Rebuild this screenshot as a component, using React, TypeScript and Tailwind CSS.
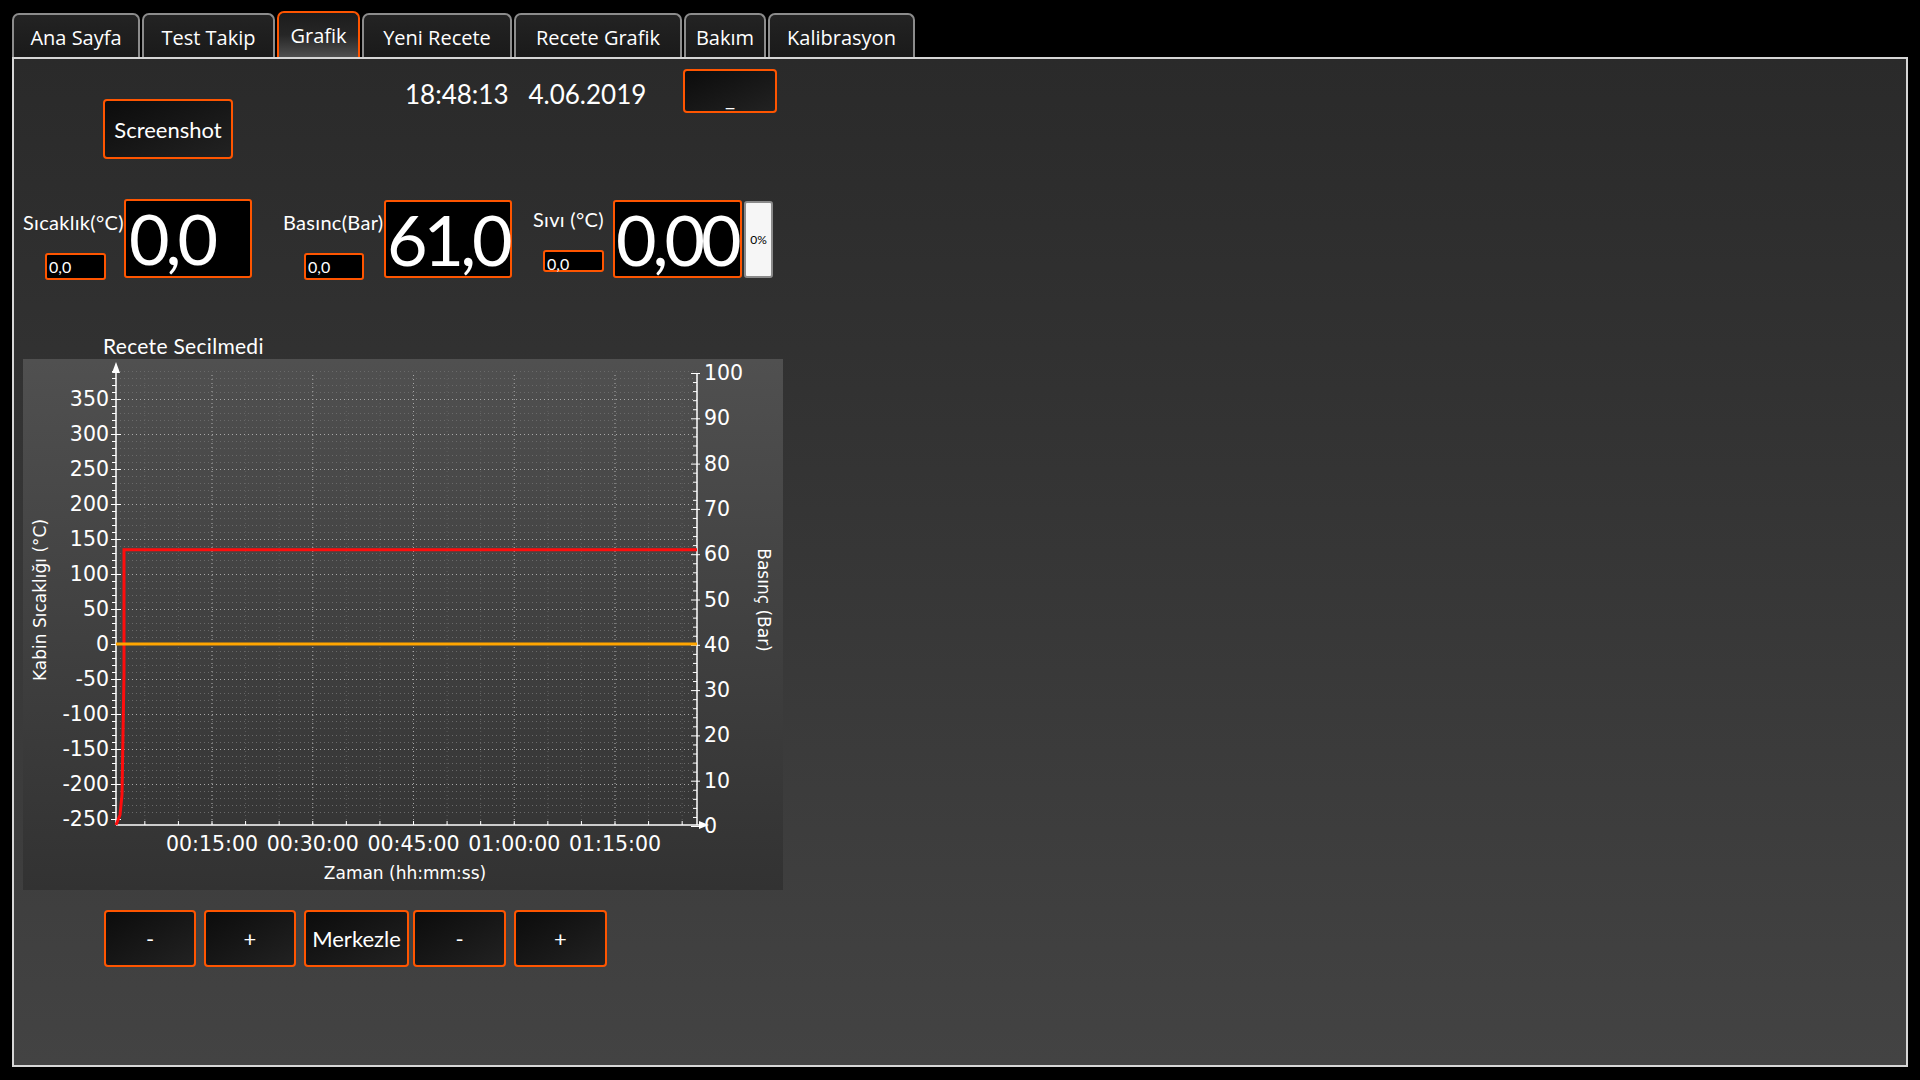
import React from "react";

const tabs = [
  { label: "Ana Sayfa", w: "w-[128px]" },
  { label: "Test Takip", w: "w-[133px]" },
  { label: "Grafik", w: "w-[83px]", active: true },
  { label: "Yeni Recete", w: "w-[150px]" },
  { label: "Recete Grafik", w: "w-[168px]" },
  { label: "Bakım", w: "w-[82px]" },
  { label: "Kalibrasyon", w: "w-[147px]" },
];

const orangeBtn =
  "flex items-center justify-center rounded-[4px] border-2 border-[#ff5500] bg-linear-to-br from-[#0c0c0c] to-[#222222] text-white";

function SmallBox({ className }: { className: string }) {
  return (
    <div
      className={`${className} rounded-[3px] border-2 border-[#ff5500] bg-black pl-[2px] pt-[4px] text-[16px] leading-none text-white`}
    >
      0,0
    </div>
  );
}

function BigBox({ value, className }: { value: string; className: string }) {
  return (
    <div
      className={`${className} whitespace-nowrap rounded-[3px] border-2 border-[#ff5500] bg-black pl-[1px] text-[70px] leading-[74px] tracking-[-4px] text-white`}
    >
      {value}
    </div>
  );
}

// chart geometry (local to the chart panel)
const AX = 93; // left axis x
const RX = 674; // right axis x
const BY = 466; // x axis y
const yl = (v: number) => 285 - v * 0.7;
const yr = (v: number) => 467 - v * 4.53;
const majorX = [189, 289.75, 390.5, 491.25, 592];
const step = 100.75 / 3;

function Chart() {
  const leftMinor: number[] = [];
  for (let v = -250; v <= 390; v += 10) leftMinor.push(v);
  const rightMinor: number[] = [];
  for (let v = 0; v <= 100; v += 2) rightMinor.push(v);
  const xTicks: number[] = [];
  for (let x = majorX[0] - 2 * step; x < RX - 4; x += step) if (x > AX + 4) xTicks.push(x);

  return (
    <svg width="760" height="531" viewBox="0 0 760 531" className="block">
      {/* minor horizontal grid */}
      {leftMinor.map((v) =>
        v % 50 !== 0 ? (
          <line key={"hm" + v} x1={AX} x2={RX} y1={yl(v) + 0.5} y2={yl(v) + 0.5} stroke="#6a6a6a" strokeDasharray="1 3" />
        ) : null
      )}
      {/* minor vertical grid */}
      {xTicks.map((x) => (
        <line key={"vm" + x} x1={x} x2={x} y1={16} y2={BY} stroke="#5e5e5e" strokeDasharray="1 3" />
      ))}
      {/* major grid */}
      {[-200, -150, -100, -50, 0, 50, 100, 150, 200, 250, 300, 350].map((v) => (
        <line key={"hM" + v} x1={AX} x2={RX} y1={yl(v) + 0.5} y2={yl(v) + 0.5} stroke="#a8a8a8" strokeDasharray="1 3" />
      ))}
      {majorX.map((x) => (
        <line key={"vM" + x} x1={x} x2={x} y1={16} y2={BY} stroke="#a8a8a8" strokeDasharray="1 3" />
      ))}

      {/* axes */}
      <line x1={AX} x2={AX} y1={6} y2={BY} stroke="#ffffff" strokeWidth="1.5" />
      <polygon points={`${AX - 4},${14} ${AX},${3} ${AX + 4},${14}`} fill="#ffffff" />
      <line x1={RX} x2={RX} y1={yr(100)} y2={BY} stroke="#ffffff" strokeWidth="1.5" />
      <line x1={AX} x2={RX + 6} y1={BY} y2={BY} stroke="#ffffff" strokeWidth="1.5" />
      <polygon points={`${RX + 2},${BY - 4} ${RX + 12},${BY} ${RX + 2},${BY + 4}`} fill="#ffffff" />

      {leftMinor.map((v) => (
        <line
          key={"lt" + v}
          x1={v % 50 === 0 ? AX - 5 : AX - 4}
          x2={v % 50 === 0 ? AX + 5 : AX}
          y1={yl(v) + 0.5}
          y2={yl(v) + 0.5}
          stroke="#ffffff"
        />
      ))}
      {rightMinor.map((v) => (
        <line
          key={"rt" + v}
          x1={v % 10 === 0 ? RX - 6 : RX - 4}
          x2={v % 10 === 0 ? RX + 3 : RX}
          y1={yr(v) + 0.5}
          y2={yr(v) + 0.5}
          stroke="#ffffff"
        />
      ))}
      {xTicks.map((x) => (
        <line key={"xt" + x} x1={x} x2={x} y1={BY - 4} y2={BY} stroke="#ffffff" />
      ))}

      {/* series */}
      <polyline
        points={`${AX},${BY} ${AX + 4},${BY - 10} ${AX + 6},${BY - 30} ${AX + 8},${yl(0) + 30} ${AX + 8},${yr(61)} ${RX},${yr(61)}`}
        fill="none"
        stroke="#ff0d0d"
        strokeWidth="3"
      />
      <line x1={AX} x2={RX} y1={yl(0)} y2={yl(0)} stroke="#ffa500" strokeWidth="3" />

      {/* labels */}
      <g fill="#ffffff" fontFamily="DejaVu Sans, sans-serif" fontSize="20.5">
        {[350, 300, 250, 200, 150, 100, 50, 0, -50, -100, -150, -200, -250].map((v) => (
          <text key={"ll" + v} x={86} y={yl(v) + 7} textAnchor="end">
            {v}
          </text>
        ))}
        {[100, 90, 80, 70, 60, 50, 40, 30, 20, 10, 0].map((v) => (
          <text key={"rl" + v} x={681} y={yr(v) + 7}>
            {v}
          </text>
        ))}
        {["00:15:00", "00:30:00", "00:45:00", "01:00:00", "01:15:00"].map((t, i) => (
          <text key={t} x={majorX[i]} y={492} textAnchor="middle">
            {t}
          </text>
        ))}
      </g>
      <g fill="#ffffff" fontFamily="DejaVu Sans, sans-serif" fontSize="17">
        <text x={382} y={520} textAnchor="middle">
          Zaman (hh:mm:ss)
        </text>
        <text x={0} y={0} textAnchor="middle" transform="translate(23 241) rotate(-90)">
          Kabin Sıcaklığı (°C)
        </text>
        <text x={0} y={0} textAnchor="middle" transform="translate(735 241) rotate(90)">
          Basınç (Bar)
        </text>
      </g>
    </svg>
  );
}

export default function App() {
  return (
    <div className="h-[1080px] w-[1920px] overflow-hidden bg-black font-[Lato,sans-serif] text-white">
      {/* Tabs */}
      <div className="flex h-[57px] items-end gap-[2px] pl-[12px] font-['Open_Sans',sans-serif] text-[20px]">
        {tabs.map((t) => (
          <div
            key={t.label}
            className={
              t.active
                ? `${t.w} flex h-[46px] items-center justify-center rounded-t-[7px] border-2 border-b-0 border-[#ff5500] bg-linear-to-b from-[#1c1c1c] via-[#262626] to-[#505050] pt-[2px]`
                : `${t.w} flex h-[44px] items-center justify-center rounded-t-[7px] border-2 border-b-0 border-[#8c8c8c] bg-linear-to-b from-[#232323] to-[#1a1a1a] pt-[4px]`
            }
          >
            {t.label}
          </div>
        ))}
      </div>

      {/* Panel */}
      <div className="ml-[12px] h-[1010px] w-[1896px] border-2 border-[#d6d6d6] bg-linear-to-b from-[#2a2a2a] to-[#434343]">
        {/* top row */}
        <div className="flex items-start">
          <div className={`${orangeBtn} ml-[89px] mt-[40px] h-[60px] w-[130px] text-[22px]`}>Screenshot</div>
          <div className="ml-[172px] mt-[22px] flex w-[238px] gap-[20px] whitespace-nowrap text-[26px] leading-none">
            <span>18:48:13</span>
            <span>4.06.2019</span>
          </div>
          <div className={`${orangeBtn} ml-[40px] mt-[10px] h-[44px] w-[94px] items-end pb-[2px] text-[22px] leading-none`}>
            _
          </div>
        </div>

        {/* readouts */}
        <div className="ml-[9px] mt-[40px] flex items-start">
          <div className="w-[101px]">
            <div className="mt-[11px] whitespace-nowrap text-[20px] tracking-[0.3px] leading-[24px]">Sıcaklık(°C)</div>
            <SmallBox className="ml-[22px] mt-[19px] h-[27px] w-[61px]" />
          </div>
          <BigBox value="0,0" className="h-[79px] w-[128px] pl-[3px] tracking-[-2px]" />

          <div className="ml-[31px] w-[101px]">
            <div className="mt-[11px] whitespace-nowrap text-[20px] tracking-[0.3px] leading-[24px]">Basınc(Bar)</div>
            <SmallBox className="ml-[21px] mt-[19px] h-[27px] w-[60px]" />
          </div>
          <BigBox value="61,0" className="mt-[1px] h-[78px] w-[128px]" />

          <div className="ml-[21px] w-[80px]">
            <div className="mt-[8px] whitespace-nowrap text-[20px] tracking-[0.3px] leading-[24px]">Sıvı (°C)</div>
            <SmallBox className="ml-[10px] mt-[19px] h-[22px] w-[61px] pt-[2px]" />
          </div>
          <BigBox value="0,00" className="mt-[1px] h-[78px] w-[129px]" />
          <div className="ml-[2px] mt-[2px] flex h-[77px] w-[29px] items-center justify-center rounded-[3px] border-2 border-[#8a8a8a] bg-[#f6f6f6] text-[12px] text-black">
            0%
          </div>
        </div>

        <div className="ml-[89px] mt-[56px] text-[21px] tracking-[0.3px] leading-[20px]">Recete Secilmedi</div>

        {/* chart */}
        <div className="ml-[9px] mt-[3px] h-[531px] w-[760px] bg-linear-to-b from-[#505050] to-[#323232]">
          <Chart />
        </div>

        {/* zoom buttons */}
        <div className="ml-[90px] mt-[20px] flex items-start text-[22px]">
          <div className={`${orangeBtn} h-[57px] w-[92px]`}>-</div>
          <div className={`${orangeBtn} ml-[8px] h-[57px] w-[92px]`}>+</div>
          <div className={`${orangeBtn} ml-[8px] h-[57px] w-[105px]`}>Merkezle</div>
          <div className={`${orangeBtn} ml-[4px] h-[57px] w-[93px]`}>-</div>
          <div className={`${orangeBtn} ml-[8px] h-[57px] w-[93px]`}>+</div>
        </div>
      </div>
    </div>
  );
}
